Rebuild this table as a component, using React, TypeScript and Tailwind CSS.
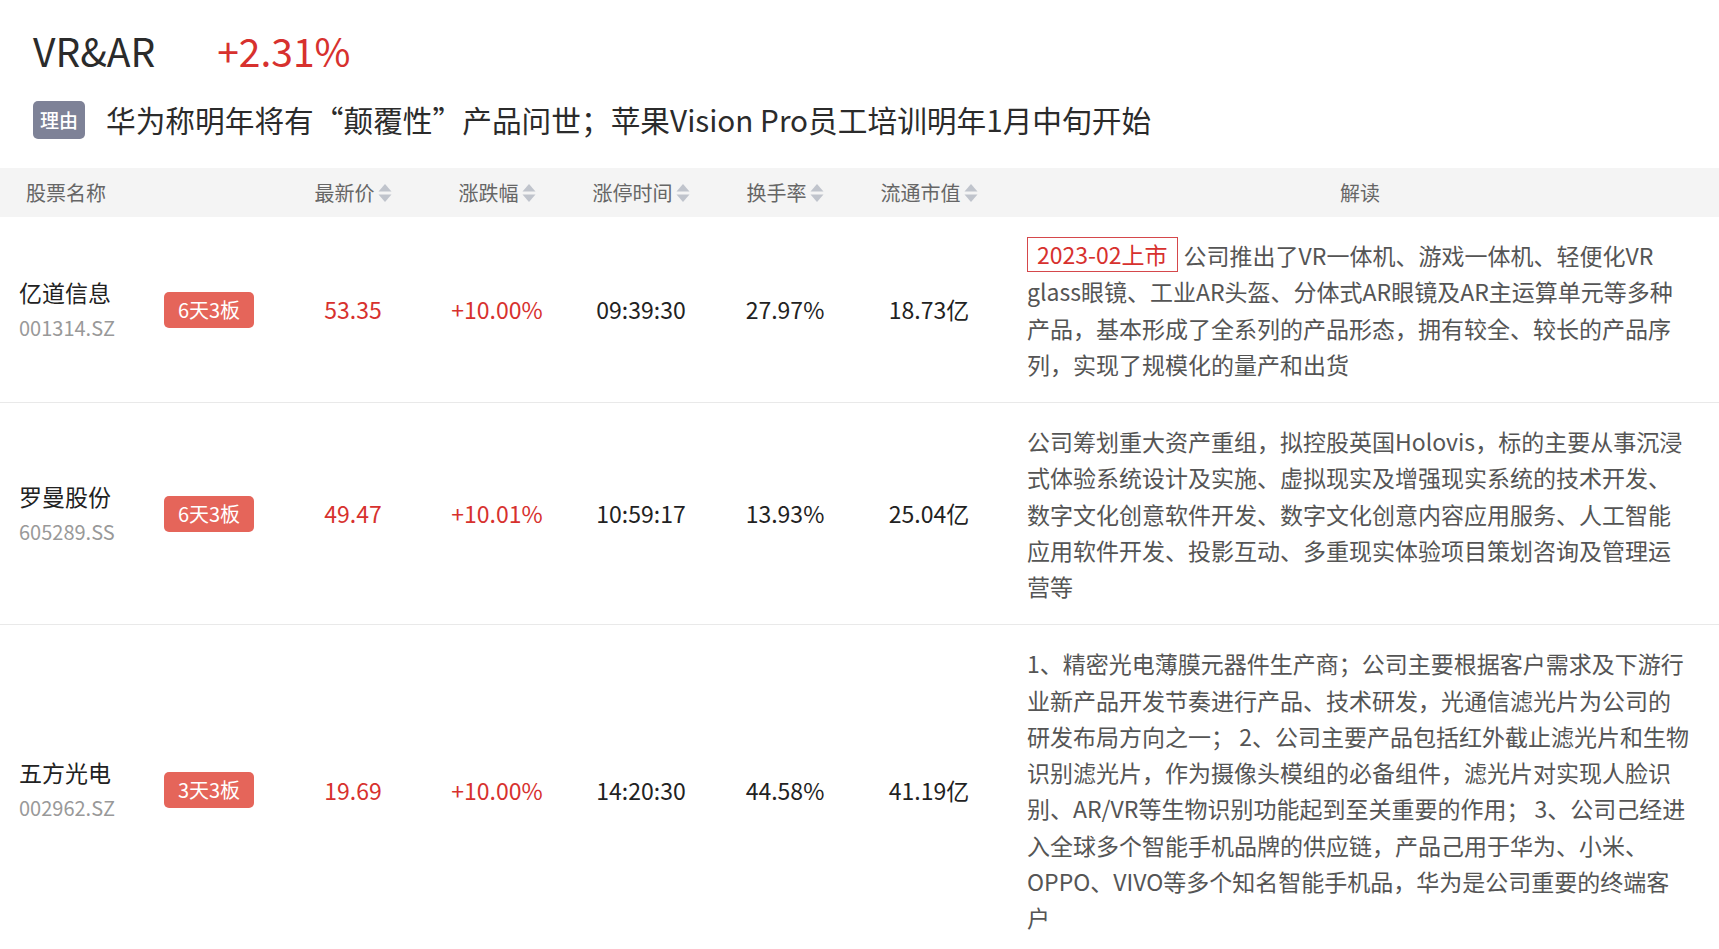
import React from 'react'

interface StockRow {
  name: string
  code: string
  streak: string
  price: string
  change: string
  limitTime: string
  turnover: string
  marketCap: string
  listed?: string
  comment: string
}

const rows: StockRow[] = [
  {
    name: '亿道信息',
    code: '001314.SZ',
    streak: '6天3板',
    price: '53.35',
    change: '+10.00%',
    limitTime: '09:39:30',
    turnover: '27.97%',
    marketCap: '18.73亿',
    listed: '2023-02上市',
    comment:
      '公司推出了VR一体机、游戏一体机、轻便化VR glass眼镜、工业AR头盔、分体式AR眼镜及AR主运算单元等多种产品，基本形成了全系列的产品形态，拥有较全、较长的产品序列，实现了规模化的量产和出货',
  },
  {
    name: '罗曼股份',
    code: '605289.SS',
    streak: '6天3板',
    price: '49.47',
    change: '+10.01%',
    limitTime: '10:59:17',
    turnover: '13.93%',
    marketCap: '25.04亿',
    comment:
      '公司筹划重大资产重组，拟控股英国Holovis，标的主要从事沉浸式体验系统设计及实施、虚拟现实及增强现实系统的技术开发、数字文化创意软件开发、数字文化创意内容应用服务、人工智能应用软件开发、投影互动、多重现实体验项目策划咨询及管理运营等',
  },
  {
    name: '五方光电',
    code: '002962.SZ',
    streak: '3天3板',
    price: '19.69',
    change: '+10.00%',
    limitTime: '14:20:30',
    turnover: '44.58%',
    marketCap: '41.19亿',
    comment:
      '1、精密光电薄膜元器件生产商；公司主要根据客户需求及下游行业新产品开发节奏进行产品、技术研发，光通信滤光片为公司的研发布局方向之一； 2、公司主要产品包括红外截止滤光片和生物识别滤光片，作为摄像头模组的必备组件，滤光片对实现人脸识别、AR/VR等生物识别功能起到至关重要的作用； 3、公司己经进入全球多个智能手机品牌的供应链，产品己用于华为、小米、OPPO、VIVO等多个知名智能手机品，华为是公司重要的终端客户',
  },
]

const gridCols = 'grid grid-cols-[137px_144px_144px_144px_144px_144px_144px_1fr]'

function SortIcon() {
  return (
    <svg width="14" height="20" viewBox="0 0 14 20" className="ml-[3px] shrink-0">
      <path d="M7 1 L13.5 8.5 L0.5 8.5 Z" fill="#c0c4cc" />
      <path d="M0.5 11.5 L13.5 11.5 L7 19 Z" fill="#c0c4cc" />
    </svg>
  )
}

function SortHeader({ label }: { label: string }) {
  return (
    <div className="flex items-center justify-center">
      <span>{label}</span>
      <SortIcon />
    </div>
  )
}

export default function App() {
  return (
    <div className="min-h-screen bg-white font-['Noto_Sans_CJK_SC',sans-serif]">
      <section className="px-[33px] pt-[26px]">
        <div className="flex h-[48px] items-center gap-[62px] text-[39px]">
          <h1 className="text-[#2b2b2b]">VR&amp;AR</h1>
          <span className="text-[#d7312e]">+2.31%</span>
        </div>
        <div className="mt-[27px] flex h-[38px] items-center gap-[21px]">
          <span className="flex h-[38px] w-[52px] items-center justify-center rounded-[5px] bg-[#7e8297] text-[19px] font-medium text-white">
            理由
          </span>
          <p className="text-[29.7px] text-[#2b2b2b]">
            华为称明年将有“颠覆性”产品问世；苹果Vision Pro员工培训明年1月中旬开始
          </p>
        </div>
      </section>

      <div className="mt-[29px]">
        <div className={`${gridCols} h-[49px] items-center bg-[#f4f4f4] text-[20px] text-[#666]`}>
          <div className="col-span-2 pl-[26px]">股票名称</div>
          <SortHeader label="最新价" />
          <SortHeader label="涨跌幅" />
          <SortHeader label="涨停时间" />
          <SortHeader label="换手率" />
          <SortHeader label="流通市值" />
          <div className="text-center">解读</div>
        </div>

        {rows.map((row) => (
          <div
            key={row.code}
            className={`${gridCols} items-center border-b border-[#e9e9e9] text-[23px]`}
          >
            <div className="pl-[19px]">
              <div className="leading-[36px] text-[#222]">{row.name}</div>
              <div className="text-[20px] leading-[36px] text-[#999]">{row.code}</div>
            </div>
            <div className="flex justify-center">
              <span className="rounded-[5px] bg-[#e5655a] px-[14px] text-[20px] leading-[36px] text-white">
                {row.streak}
              </span>
            </div>
            <div className="text-center text-[#d7312e]">{row.price}</div>
            <div className="text-center text-[#d7312e]">{row.change}</div>
            <div className="text-center text-[#222]">{row.limitTime}</div>
            <div className="text-center text-[#222]">{row.turnover}</div>
            <div className="text-center text-[#222]">{row.marketCap}</div>
            <div className="py-[20px] pl-[26px] pr-[28px] leading-[36.25px] text-[#555]">
              {row.listed && (
                <span className="mr-[6px] inline-block border border-[#d5484b] px-[9px] align-top leading-[33px] text-[#d7312e]">
                  {row.listed}
                </span>
              )}
              {row.comment}
            </div>
          </div>
        ))}
      </div>
    </div>
  )
}
